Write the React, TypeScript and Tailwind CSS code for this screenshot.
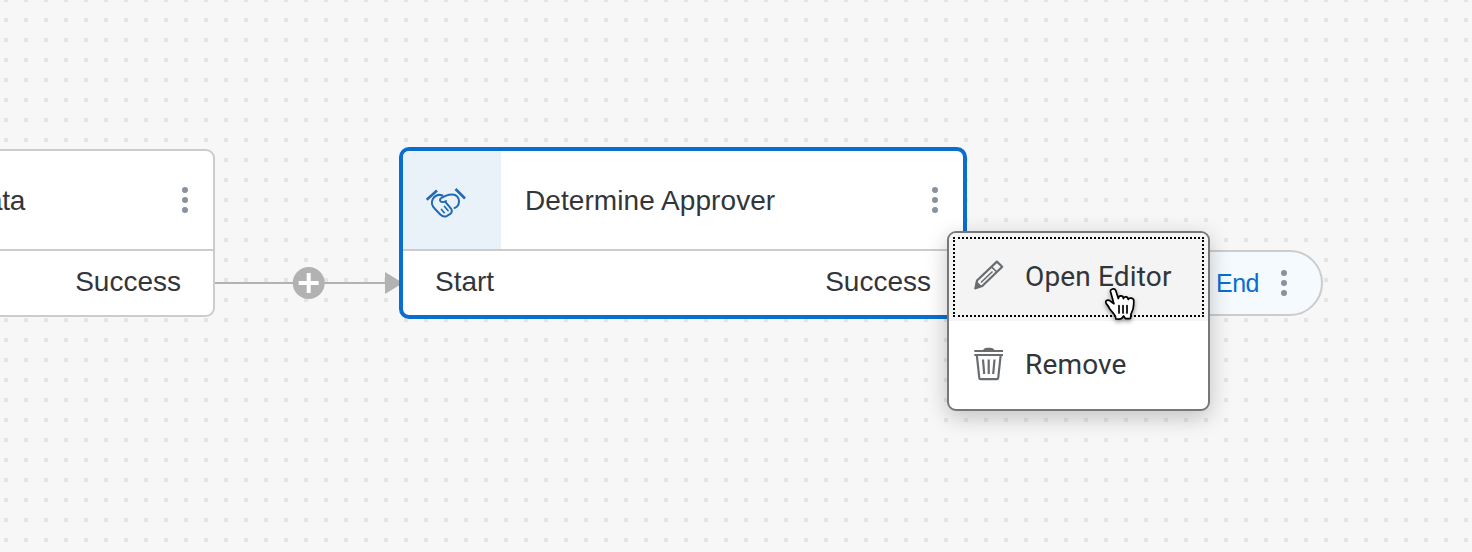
import type { ReactNode } from "react";

function MoreDots() {
  return (
    <span className="flex w-[6px] shrink-0 flex-col gap-1">
      <i className="h-[6px] w-[6px] rounded-full bg-[#8a929c]" />
      <i className="h-[6px] w-[6px] rounded-full bg-[#8a929c]" />
      <i className="h-[6px] w-[6px] rounded-full bg-[#8a929c]" />
    </span>
  );
}

function Handshake() {
  return (
    <svg className="block" width="42" height="32" viewBox="0 0 42 32" fill="none" stroke="#2369b3" strokeWidth="2" strokeLinecap="round" strokeLinejoin="round">
      <path d="M1.700 11.700 12 2.500M30.500 1l9.500 9.500" strokeWidth="2.600" strokeLinecap="butt" />
      <path d="M17.500 7.500c-4-1.500-7.500 0-9.700 3.500-1.800 3.500-.7 7 2 9.700l5.500 5.800c1.700 1.700 4.200 2.600 6.300 1.600l3.700-2.200c1.800-1.300 2-3.600.7-5.200l-5.500-6.500" />
      <path d="M29.500 20c3.200-1 4.500-4 4.500-7 0-3.500-2.700-6.500-6.500-6.500-3 0-5 .6-7 1.400l-4 2c-2.500 1.300-1.700 4.200 1 4.200 1.500 0 2.500-.5 3.500-1" />
      <path d="m16.500 21.500 2.700 3.200M19.500 18.500l3.500 4" strokeWidth="1.700" />
    </svg>
  );
}

function Pencil() {
  return (
    <svg className="-mt-[4px] block shrink-0" width="30" height="30" viewBox="0 0 30 30" fill="none" stroke="#6a6d70" strokeWidth="2.200" strokeLinejoin="round">
      <path d="M3 20.500 22.900 1.600 28.200 6.700 8.300 26 1.500 28.300Z" />
      <path d="M17.500 6.800l5.400 5.200M18.500 11.500 7 22.500" strokeWidth="1.600" />
      <path d="M2.500 21l5.700 5.500L.3 29.200Z" fill="#6a6d70" stroke="none" />
    </svg>
  );
}

function Trash() {
  return (
    <svg className="-mt-[3px] block shrink-0" width="30" height="34" viewBox="0 0 30 34" fill="none" stroke="#6a6d70" strokeWidth="2.200">
      <path d="M.3 4H29M.3 8H29" />
      <path d="M9 3.500C9.500 1.500 11 .7 13 .7h3.500c2 0 3.500.8 4 2.800Z" fill="#6a6d70" stroke="none" />
      <path d="M2.800 8 5.300 31c.1.900.4 1.200 1.200 1.200h16.500c.8 0 1.100-.3 1.200-1.200L26.700 8" />
      <path d="M9 12.500 10.200 27M14.700 12.500V27M20.500 12.500 19.200 27" />
    </svg>
  );
}

function PointerHand() {
  return (
    <svg
      className="absolute left-[1102px] top-[285px] z-30 drop-shadow-[0_2px_2px_rgba(0,0,0,0.4)]"
      width="36"
      height="40"
      viewBox="0 0 36 40"
      fill="#fff"
      stroke="#000"
      strokeWidth="1.700"
      strokeLinejoin="round"
      strokeLinecap="round"
    >
      <path d="M8.500 6.500C8 4 12.800 2.600 13.800 5.500l2.500 8c.5-3.600 5-3.300 5.200.1.600-2.600 4.500-2.300 4.700.8.800-2 5.600-1.700 5.600 1.500 0 4.500 0 7.600-1.900 10.800-1.100 1.900-1.400 3.600-1.400 6.800-1.700.4-3.400.2-4.900.1-.8-.7-1.300-1.600-2-2.600-1 1.600-1.700 2.700-3 2.900-1.700.3-3.400.1-4.800 0 .1-2.200-.6-3.400-2-5l-4-4.900c-1-2-1.900-3.500-3.500-5.400-1.800-2.600 1.200-4.800 4-2.600l3.600 2.700Z" />
      <path d="M17 20.500v7.500M21 20.500v7.500M25 20.500v7.500" />
    </svg>
  );
}

function PortLabel({ children }: { children: ReactNode }) {
  return <span className="text-[28px] leading-8">{children}</span>;
}

function MenuItem({ icon, label, active }: { icon: ReactNode; label: string; active?: boolean }) {
  return (
    <div className={active ? "h-[88px] rounded-t-[7px] bg-[#f4f4f4] p-1" : "h-[88px] rounded-b-[7px] p-1"}>
      <div
        className={
          active
            ? "flex h-full items-center gap-5 border-2 border-dotted border-black pl-[19px]"
            : "flex h-full items-center gap-5 border-2 border-transparent pl-[19px]"
        }
      >
        {icon}
        <span className="whitespace-nowrap pl-px font-['Roboto',sans-serif] text-[28px] leading-8 tracking-[0.16px]">{label}</span>
      </div>
    </div>
  );
}

export default function App() {
  return (
    <main className="relative h-[552px] w-[1472px] overflow-hidden bg-[#f7f7f7] font-['Liberation_Sans',Arial,sans-serif] text-[#32363a]">
      <svg className="absolute inset-0" width="1472" height="552">
        <defs>
          <pattern id="dots" width="20" height="20" patternUnits="userSpaceOnUse" y="8">
            <rect x="4" y="10" width="4" height="4" fill="#e5e5e5" />
          </pattern>
        </defs>
        <rect width="1472" height="552" fill="url(#dots)" />
        <path d="M214 283H386" stroke="#b2b2b2" strokeWidth="2" />
        <path d="M385 272 403 283 385 294Z" fill="#b2b2b2" />
        <circle cx="308.700" cy="283" r="16" fill="#b2b2b2" />
        <path d="M298.700 283h20M308.700 273v20" stroke="#fff" strokeWidth="4" />
      </svg>

      <section className="absolute left-[-100px] top-[149px] flex h-[168px] w-[315px] flex-col overflow-hidden rounded-[9px] border-2 border-[#ccc] bg-white">
        <div className="flex h-[100px] shrink-0 items-center justify-between border-b-2 border-[#ccc] pl-[65px] pr-[25px]">
          <span className="pt-[2px] text-[28px] leading-8 tracking-[-0.3px]">Data</span>
          <MoreDots />
        </div>
        <div className="flex grow items-center justify-end pb-[2px] pr-[32px]">
          <PortLabel>Success</PortLabel>
        </div>
      </section>

      <section className="absolute left-[399px] top-[147px] flex h-[172px] w-[568px] flex-col overflow-hidden rounded-[10px] border-4 border-[#0a6ed1] bg-white">
        <div className="flex h-[100px] shrink-0 items-center border-b-2 border-[#ccc] pr-[25px]">
          <div className="flex h-full w-[98px] items-center bg-[#eaf2f9] pl-[22px] pt-[8px]">
            <Handshake />
          </div>
          <span className="grow pl-6 pt-[2px] text-[28px] leading-8 tracking-[0.07px]">Determine Approver</span>
          <MoreDots />
        </div>
        <div className="flex grow items-center justify-between pb-[2px] pl-[32px] pr-[32px]">
          <PortLabel>Start</PortLabel>
          <PortLabel>Success</PortLabel>
        </div>
      </section>

      <section className="absolute left-[1150px] top-[250px] flex h-[66px] w-[173px] items-center justify-between rounded-full border-2 border-[#ccc] bg-[#f5faff] pl-[64px] pr-[34px]">
        <span className="text-[25px] leading-8 tracking-[-0.5px] text-[#0a6ed1]">End</span>
        <MoreDots />
      </section>

      <div className="absolute left-[947px] top-[231px] z-20 flex h-[180px] w-[263px] flex-col rounded-[9px] border-2 border-[#777] bg-white shadow-[0_6px_22px_rgba(0,0,0,0.22)]">
        <MenuItem active icon={<Pencil />} label="Open Editor" />
        <MenuItem icon={<Trash />} label="Remove" />
      </div>
      <PointerHand />
    </main>
  );
}
